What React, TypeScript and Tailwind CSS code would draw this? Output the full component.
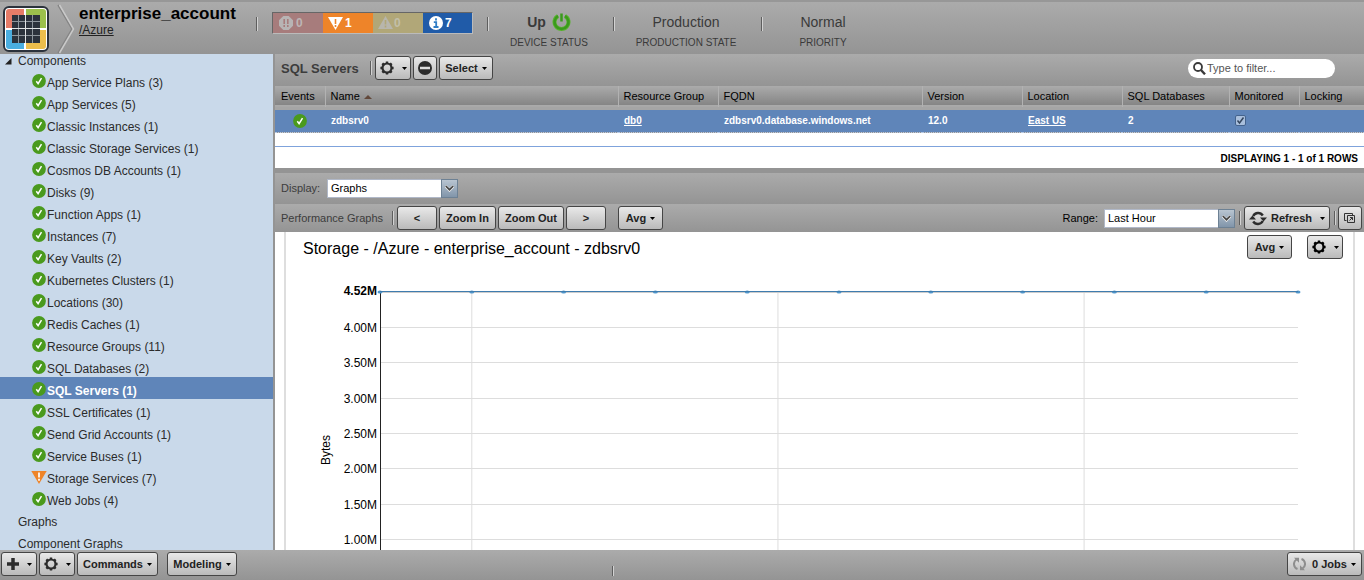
import { useState, type ReactNode } from "react";

const components: { name: string; warn?: boolean }[] = [
  { name: "App Service Plans (3)" },
  { name: "App Services (5)" },
  { name: "Classic Instances (1)" },
  { name: "Classic Storage Services (1)" },
  { name: "Cosmos DB Accounts (1)" },
  { name: "Disks (9)" },
  { name: "Function Apps (1)" },
  { name: "Instances (7)" },
  { name: "Key Vaults (2)" },
  { name: "Kubernetes Clusters (1)" },
  { name: "Locations (30)" },
  { name: "Redis Caches (1)" },
  { name: "Resource Groups (11)" },
  { name: "SQL Databases (2)" },
  { name: "SQL Servers (1)" },
  { name: "SSL Certificates (1)" },
  { name: "Send Grid Accounts (1)" },
  { name: "Service Buses (1)" },
  { name: "Storage Services (7)", warn: true },
  { name: "Web Jobs (4)" },
];

const bar = "bg-linear-to-b from-[#ababab] to-[#949494]";

function Logo() {
  return (
    <svg width="46" height="46" viewBox="0 0 46 46" role="img" aria-label="Home" className="block">
      <rect x="1" y="1" width="44" height="44" rx="5" fill="#fff" stroke="#2b323c" strokeWidth="2" />
      <path d="M6 3h15v19H3V6a3 3 0 0 1 3-3z" fill="#e67c68" />
      <path d="M23 3h17a3 3 0 0 1 3 3v16H23z" fill="#9cc14c" />
      <path d="M3 24h18v19H6a3 3 0 0 1-3-3z" fill="#4aaee0" />
      <path d="M23 24h20v16a3 3 0 0 1-3 3H23z" fill="#ecbe4c" />
      <rect x="9" y="9" width="28" height="28" fill="#2b323c" />
      <path d="M15.500 9v28M29.500 9v28M9 15.500h28M9 29.500h28" stroke="#8d959c" strokeWidth="1" />
      <path d="M22.500 9v28M9 22.500h28" stroke="#dfe2e4" strokeWidth="1" />
    </svg>
  );
}

function Chevron() {
  return (
    <svg width="18" height="50" viewBox="0 0 18 50" className="block" aria-hidden="true">
      <path d="M1 1l14 24L1 49" fill="none" stroke="#858585" strokeWidth="1.500" />
      <path d="M2.500 1l14 24-14 24" fill="none" stroke="#c9c9c9" strokeWidth="1.500" />
    </svg>
  );
}

function Check() {
  return (
    <svg width="14" height="14" viewBox="0 0 14 14" className="block shrink-0" aria-hidden="true">
      <circle cx="7" cy="7" r="6.900" fill="#4a9a1d" />
      <path d="M4.300 7.300l1.800 2.400 3.400-5.500" fill="none" stroke="#fff" strokeWidth="1.500" />
    </svg>
  );
}

function Warn() {
  return (
    <svg width="14" height="14" viewBox="0 0 14 14" className="block shrink-0 overflow-visible" aria-hidden="true">
      <path d="M-.7 1h15.400L7 14z" fill="#ee8429" />
      <path d="M7 2.500v5M7 8.800v1.900" stroke="#fff" strokeWidth="1.700" />
    </svg>
  );
}

function Gear({ dark }: { dark?: boolean }) {
  const color = dark ? "#000" : "#2c2c2c";
  return (
    <svg width="14" height="14" viewBox="0 0 14 14" className="block" aria-hidden="true">
      {[0, 45, 90, 135].map((a) => (
        <path key={a} d="M7 .4v2.600M7 11v2.600" stroke={color} strokeWidth="2.400" transform={`rotate(${a} 7 7)`} />
      ))}
      <circle cx="7" cy="7" r="4.500" fill="none" stroke={color} strokeWidth="2.200" />
    </svg>
  );
}

function Caret() {
  return (
    <svg width="5" height="3" viewBox="0 0 5 3" className="block" aria-hidden="true">
      <path d="M0 0h5L2.500 3z" fill="#000" />
    </svg>
  );
}

function RefreshIcon() {
  return (
    <svg width="18" height="15" viewBox="0 0 18 15" className="block" aria-hidden="true">
      <path d="M4.200 5A5.600 5.600 0 0 1 13.800 4.500M13.800 10A5.600 5.600 0 0 1 4.200 10.500" fill="none" stroke="#2c2c2c" strokeWidth="2.400" />
      <path d="M0 8.500h7L3.500 4.500zM11 6.500h7L14.500 10.500z" fill="#2c2c2c" />
    </svg>
  );
}

function JobsIcon() {
  return (
    <svg width="13" height="14" viewBox="0 0 13 14" className="block" aria-hidden="true">
      <path d="M4.500 12A5.300 5.300 0 0 1 3.500 2.500M8.500 2A5.300 5.300 0 0 1 9.500 11.500" fill="none" stroke="#8e8e8e" strokeWidth="2" />
      <path d="M1 .8h5v5zM12 13.200H7v-5z" fill="#8e8e8e" />
    </svg>
  );
}

function Button({ children, className = "", label }: { children: ReactNode; className?: string; label?: string }) {
  return (
    <button
      type="button"
      aria-label={label}
      className={`flex h-6 shrink-0 items-center justify-center rounded-[3px] border border-[#454545] bg-linear-to-b from-[#e9e9e9] to-[#bababa] text-[11px] font-bold text-[#222] ${className}`}
    >
      {children}
    </button>
  );
}

function Divider({ className = "h-3.5" }: { className?: string }) {
  return <span className={`w-0.5 shrink-0 border-l border-r border-l-[#5e5e5e] border-r-[#d2d2d2] ${className}`} />;
}

function Combo({ id, options }: { id: string; options: string[] }) {
  return (
    <div className="grid h-[19px] w-[131px] shrink-0 bg-white">
      <select
        id={id}
        className="h-[19px] w-full appearance-none border border-[#b0b8c8] bg-white px-[3px] text-[11px] leading-none text-black outline-none [grid-area:1/1]"
      >
        {options.map((o) => (
          <option key={o}>{o}</option>
        ))}
      </select>
      <span className="pointer-events-none flex w-[17px] items-center justify-center justify-self-end border border-[#6d8194] bg-linear-to-b from-[#b9c5d1] to-[#8195aa] [grid-area:1/1]">
        <svg width="9" height="7" viewBox="0 0 9 7" aria-hidden="true">
          <path d="M.5 1l4 4 4-4" fill="none" stroke="#eee" strokeWidth="3" />
          <path d="M.8 1l3.700 3.700L8.200 1" fill="none" stroke="#444" strokeWidth="1.700" />
        </svg>
      </span>
    </div>
  );
}

function Status({ value, label, className }: { value: ReactNode; label: string; className: string }) {
  return (
    <div className={`flex shrink-0 flex-col items-center pt-2.5 pr-1 text-[#3a3a3a] ${className}`}>
      <div className="flex h-5 items-center gap-1.5 text-sm">{value}</div>
      <div className="mt-[5px] text-[10px] leading-3 whitespace-nowrap">{label}</div>
    </div>
  );
}

function Header() {
  return (
    <header className={`flex h-[54px] shrink-0 items-start border-t-2 border-[#979797] ${bar}`}>
      <a href="#home" className="mt-1 ml-[3px]">
        <Logo />
      </a>
      <div className="mt-0.5 ml-2">
        <Chevron />
      </div>
      <div className="ml-1 w-[177px] shrink-0 pt-0.5">
        <h1 className="text-[17px] leading-5 font-bold text-black">enterprise_account</h1>
        <a href="#azure" className="block text-xs leading-3 text-[#222] underline">
          /Azure
        </a>
      </div>
      <Divider className="mt-[15px] h-3.5" />
      <div className="mt-2.5 ml-3.5 flex h-[22px] shrink-0 border border-[#666] border-r-[#bbb] border-b-[#bbb] text-xs leading-5 font-bold">
        <div className="flex w-[50px] items-center gap-[3px] bg-[#a77c7c] pl-1.5 text-[#bdb5b5]">
          <svg width="14" height="14" viewBox="0 0 14 14" aria-hidden="true">
            <path d="M4.300 0h5.400L14 4.300v5.400L9.700 14H4.300L0 9.700V4.300z" fill="#b8b4b4" />
            <path d="M5.200 3v5M8.800 3v5M5.200 9v2M8.800 9v2" stroke="#a77c7c" strokeWidth="1.600" />
          </svg>
          0
        </div>
        <div className="flex w-[50px] items-center gap-0.5 bg-[#ee8429] pl-[5px] text-white">
          <svg width="15" height="14" viewBox="0 0 15 14" aria-hidden="true">
            <path d="M0 1h15L7.500 14z" fill="#fff" />
            <path d="M7.500 3v5M7.500 9v2" stroke="#ee8429" strokeWidth="1.600" />
          </svg>
          1
        </div>
        <div className="flex w-[50px] items-center gap-px bg-[#b1a778] pl-[5px] text-[#c2bfa9]">
          <svg width="15" height="14" viewBox="0 0 15 14" aria-hidden="true">
            <path d="M7.500 0L15 13H0z" fill="#b8b6ac" />
            <path d="M7.500 4v4.500M7.500 9.500v2" stroke="#b1a778" strokeWidth="1.600" />
          </svg>
          0
        </div>
        <div className="flex w-[49px] items-center gap-0.5 bg-[#205ba8] pl-1.5 text-white">
          <svg width="14" height="14" viewBox="0 0 14 14" aria-hidden="true">
            <circle cx="7" cy="7" r="7" fill="#fff" />
            <path d="M7 2.300v2.200M4.800 6.200h2.400v4.500M4.500 11h5" fill="none" stroke="#2f7cc5" strokeWidth="1.800" />
          </svg>
          7
        </div>
      </div>
      <Divider className="mt-[15px] ml-3.5 h-3.5" />
      <Status
        className="w-[124px]"
        label="DEVICE STATUS"
        value={
          <>
            <b>Up</b>
            <svg width="19" height="20" viewBox="0 0 19 20" aria-hidden="true">
              <path d="M6 4a7 7 0 1 0 7 0" fill="none" stroke="#58b32e" strokeWidth="4" />
              <path d="M6 4a7 7 0 1 0 7 0M9.500 1.500v8" fill="none" stroke="#3a9a1c" strokeWidth="2.500" />
            </svg>
          </>
        }
      />
      <Divider className="mt-[15px] h-3.5" />
      <Status className="w-[146px]" label="PRODUCTION STATE" value="Production" />
      <Divider className="mt-[15px] h-3.5" />
      <Status className="w-[124px]" label="PRIORITY" value="Normal" />
    </header>
  );
}

function Sidebar() {
  const [selected, setSelected] = useState("SQL Servers (1)");
  return (
    <nav className="w-[275px] shrink-0 overflow-hidden border-r-2 border-[#949494] bg-[#c9d9ea] text-xs text-[#2b2b2b]">
      <div className="flex h-3.5 items-center">
        <svg width="7" height="7" viewBox="0 0 7 7" className="ml-[5px]" aria-hidden="true">
          <path d="M0 6.500h6.500V0z" fill="#222" />
        </svg>
        <span className="ml-1.5">Components</span>
      </div>
      <ul className="mt-px">
        {components.map(({ name, warn }) => (
          <li key={name}>
            <a
              href="#component"
              onClick={() => setSelected(name)}
              className={`flex h-[22px] items-center pl-8 ${name === selected ? "bg-[#5f85b9] font-bold text-white" : ""}`}
            >
              <span className="mt-0.5 mr-px">{warn ? <Warn /> : <Check />}</span>
              <span className="pt-1.5">{name}</span>
            </a>
          </li>
        ))}
      </ul>
      <a href="#graphs" className="flex h-[22px] items-center pt-1 pl-[18px]">Graphs</a>
      <a href="#component-graphs" className="flex h-[22px] items-center pt-1 pl-[18px] leading-3">Component Graphs</a>
    </nav>
  );
}

const columns = [
  { name: "Events", width: "w-[50px]" },
  { name: "Name", width: "" },
  { name: "Resource Group", width: "w-[100px]" },
  { name: "FQDN", width: "w-[204px]" },
  { name: "Version", width: "w-[100px]" },
  { name: "Location", width: "w-[100px]" },
  { name: "SQL Databases", width: "w-[107px]" },
  { name: "Monitored", width: "w-[70px]" },
  { name: "Locking", width: "w-[65px]" },
];

function ServerTable() {
  return (
    <>
      <table className="w-full table-fixed border-collapse text-[11px] leading-3">
        <thead>
          <tr className="h-[22px] border-b-[3px] border-[#a5a5a5] bg-linear-to-b from-[#ababab] to-[#858585]">
            {columns.map((c, i) => (
              <th
                key={c.name}
                scope="col"
                className={`p-0 text-left font-normal whitespace-nowrap text-black ${i ? "border-l border-l-[#b2b2b2] pl-[5px]" : "pl-1.5"} ${c.width}`}
              >
                {c.name}
                {c.name === "Name" && (
                  <svg width="8" height="4" viewBox="0 0 8 4" className="ml-1 inline" aria-hidden="true">
                    <path d="M0 4l4-4 4 4z" fill="#62483a" />
                  </svg>
                )}
              </th>
            ))}
          </tr>
        </thead>
        <tbody>
          <tr className="h-6 border-y border-dotted border-[#b5c8e4] bg-[#5f85b9] text-[10px] font-bold text-white">
            <td className="p-0 pl-[18px]">
              <Check />
            </td>
            <td className="p-0 pl-1.5">zdbsrv0</td>
            <td className="p-0 pl-1.5">
              <a href="#db0" className="underline">db0</a>
            </td>
            <td className="p-0 pl-1.5">zdbsrv0.database.windows.net</td>
            <td className="p-0 pl-1.5">12.0</td>
            <td className="p-0 pl-1.5">
              <a href="#east-us" className="underline">East US</a>
            </td>
            <td className="p-0 pl-1.5">2</td>
            <td className="p-0 pl-1.5">
              <span className="grid w-[11px]">
                <input
                  type="checkbox"
                  aria-label="Monitored"
                  defaultChecked
                  className="h-[11px] w-[11px] appearance-none rounded-xs border border-[#44638d] bg-[#a9bfdc] [grid-area:1/1]"
                />
                <svg width="11" height="11" viewBox="0 0 11 11" className="pointer-events-none [grid-area:1/1]" aria-hidden="true">
                  <path d="M2.500 5.500L4.500 8l4-5.500" fill="none" stroke="#34465e" strokeWidth="1.500" />
                </svg>
              </span>
            </td>
            <td className="p-0" />
          </tr>
        </tbody>
      </table>
      <div className="h-3.5 bg-white" />
      <div className="flex h-[22px] items-center justify-end border-t border-[#7fa3dc] bg-white pt-px pr-1.5 text-[10px] font-bold text-black">
        DISPLAYING 1 - 1 of 1 ROWS
      </div>
    </>
  );
}

const ticks = ["4.00M", "3.50M", "3.00M", "2.50M", "2.00M", "1.50M", "1.00M"];
const tickY = [37, 72, 108, 143, 178, 214, 249];
const points = [0, 10, 20, 30, 40, 50, 60, 70, 80, 90, 100];

function Axis() {
  return (
    <svg height="260" className="block w-full overflow-visible" role="img" aria-label="Storage in bytes">
      <text x="44" y="159" transform="rotate(-90 44 159)" textAnchor="middle" className="fill-black text-xs">
        Bytes
      </text>
      <text x="91" y="4" className="fill-black text-xs font-bold" textAnchor="end">
        4.52M
      </text>
      {ticks.map((t, i) => (
        <text key={t} x="91" y={tickY[i] + 4} className="fill-black text-xs" textAnchor="end">
          {t}
        </text>
      ))}
    </svg>
  );
}

function Plot() {
  return (
    <svg height="260" className="block w-full overflow-visible" aria-hidden="true">
      {tickY.map((y) => (
        <line key={y} x1="0" x2="100%" y1={y - 0.5} y2={y - 0.5} stroke="#ddd" />
      ))}
      {["10%", "43.35%", "76.7%"].map((x) => (
        <line key={x} x1={x} x2={x} y1="0" y2="260" stroke="#ddd" />
      ))}
      <line x1="0" x2="100%" y1="1.500" y2="1.500" stroke="#ccc" />
      <line x1="0.500" x2="0.500" y1="0" y2="260" stroke="#222" />
      {points.map((p) => (
        <ellipse key={p} cx={`${p}%`} cy="1" rx="2.500" ry="1.500" fill="#4f95ca" />
      ))}
      <line x1="0" x2="100%" y1="0.500" y2="0.500" stroke="#3f7cae" />
    </svg>
  );
}

function GraphPanel() {
  return (
    <section className="min-h-0 grow overflow-hidden bg-white px-[9px]">
      <div className="h-full overflow-hidden border-r-2 border-l-2 border-[#dedede]">
        <div className="flex items-start pt-[3px] pr-2.5 pl-[17px]">
          <h2 className="grow pt-0.5 text-base leading-6 text-black">Storage - /Azure - enterprise_account - zdbsrv0</h2>
          <Button className="mr-[15px] w-[45px] gap-1">
            Avg <Caret />
          </Button>
          <Button label="Graph settings" className="w-9 gap-2">
            <Gear dark />
            <Caret />
          </Button>
        </div>
        <div className="flex pt-[30px]">
          <div className="w-[94px] shrink-0">
            <Axis />
          </div>
          <div className="mr-[55px] grow">
            <Plot />
          </div>
        </div>
      </div>
    </section>
  );
}

export default function App() {
  return (
    <div className="flex h-screen flex-col overflow-hidden bg-[#949494] font-['Liberation_Sans',Arial,sans-serif]">
      <Header />
      <div className="flex min-h-0 grow">
        <Sidebar />
        <main className="flex min-w-0 grow flex-col">
          <div className={`flex h-8 shrink-0 items-center pr-[29px] pb-1 pl-1.5 ${bar}`}>
            <h2 className="w-[89px] pt-0.5 text-[13px] font-bold whitespace-nowrap text-[#3c3c3c]">SQL Servers</h2>
            <Divider />
            <Button label="Settings" className="ml-[3px] w-9 gap-2">
              <Gear />
              <Caret />
            </Button>
            <Button label="Remove" className="ml-0.5 w-6">
              <svg width="14" height="14" viewBox="0 0 14 14" aria-hidden="true">
                <circle cx="7" cy="7" r="7" fill="#2c2c2c" />
                <path d="M2 7h10" stroke="#ddd" strokeWidth="2.500" />
              </svg>
            </Button>
            <Button className="ml-0.5 w-[54px] gap-1">
              Select <Caret />
            </Button>
            <label className="ml-auto flex h-[19px] w-[147px] items-center rounded-full bg-white pl-[5px]">
              <svg width="13" height="13" viewBox="0 0 13 13" className="shrink-0" aria-hidden="true">
                <circle cx="5" cy="5" r="4" fill="none" stroke="#3a3a3a" strokeWidth="1.800" />
                <path d="M8 8l4 4.300" stroke="#3a3a3a" strokeWidth="2.400" />
              </svg>
              <input
                aria-label="Filter"
                placeholder="Type to filter..."
                className="w-full min-w-0 bg-transparent px-px text-[11px] outline-none placeholder:text-[#555]"
              />
            </label>
          </div>
          <ServerTable />
          <div className="h-[5px] shrink-0" />
          <div className={`flex h-[31px] shrink-0 items-center pl-1.5 text-[11px] text-[#3c3c3c] ${bar}`}>
            <label htmlFor="display" className="w-[46px] pb-0.5">Display:</label>
            <Combo id="display" options={["Graphs", "Events", "Details"]} />
          </div>
          <div className={`flex h-7 shrink-0 items-center pr-0.5 pl-1.5 text-[11px] text-[#3c3c3c] ${bar}`}>
            <span className="w-[111px] whitespace-nowrap">Performance Graphs</span>
            <Divider />
            <div className="ml-[3px] flex gap-0.5">
              <Button className="w-10">&lt;</Button>
              <Button className="w-[57px]">Zoom In</Button>
              <Button className="w-[66px]">Zoom Out</Button>
              <Button className="w-10">&gt;</Button>
            </div>
            <Button className="ml-3 w-[45px] gap-1">
              Avg <Caret />
            </Button>
            <label htmlFor="range" className="mr-1.5 ml-auto text-black">Range:</label>
            <Combo id="range" options={["Last Hour", "Last 24 Hours", "Last Week"]} />
            <span className="w-1" />
            <Divider />
            <Button className="ml-[3px] w-[86px] gap-1">
              <RefreshIcon />
              Refresh
              <span className="ml-1"><Caret /></span>
            </Button>
            <span className="w-1" />
            <Divider />
            <Button label="Open in new window" className="ml-0.5 w-6">
              <svg width="12" height="12" viewBox="0 0 12 12" fill="none" stroke="#333" aria-hidden="true">
                <path d="M2.500 8.500h-2v-7h8v2" />
                <path d="M3.500 3.500h7v7h-7zM5.500 8.500l3-3M6 5.500h2.500V8" />
              </svg>
            </Button>
          </div>
          <GraphPanel />
        </main>
      </div>
      <footer className={`flex h-[30px] shrink-0 items-start pt-0.5 pr-0.5 pl-px ${bar}`}>
        <Button label="Add" className="w-9 gap-2">
          <svg width="12" height="12" viewBox="0 0 12 12" aria-hidden="true">
            <path d="M6 0v12M0 6h12" stroke="#2c2c2c" strokeWidth="3.500" />
          </svg>
          <Caret />
        </Button>
        <Button label="Configure" className="ml-0.5 w-9 gap-2">
          <Gear />
          <Caret />
        </Button>
        <Button className="ml-0.5 w-[81px] gap-1">
          Commands <Caret />
        </Button>
        <Button className="ml-[9px] w-[70px] gap-1">
          Modeling <Caret />
        </Button>
        <span className="w-[375px] shrink" />
        <Divider className="mt-3.5 h-2.5" />
        <Button className="ml-auto w-[75px] gap-1">
          <JobsIcon />
          <span className="ml-0.5">0 Jobs</span>
          <Caret />
        </Button>
      </footer>
    </div>
  );
}
